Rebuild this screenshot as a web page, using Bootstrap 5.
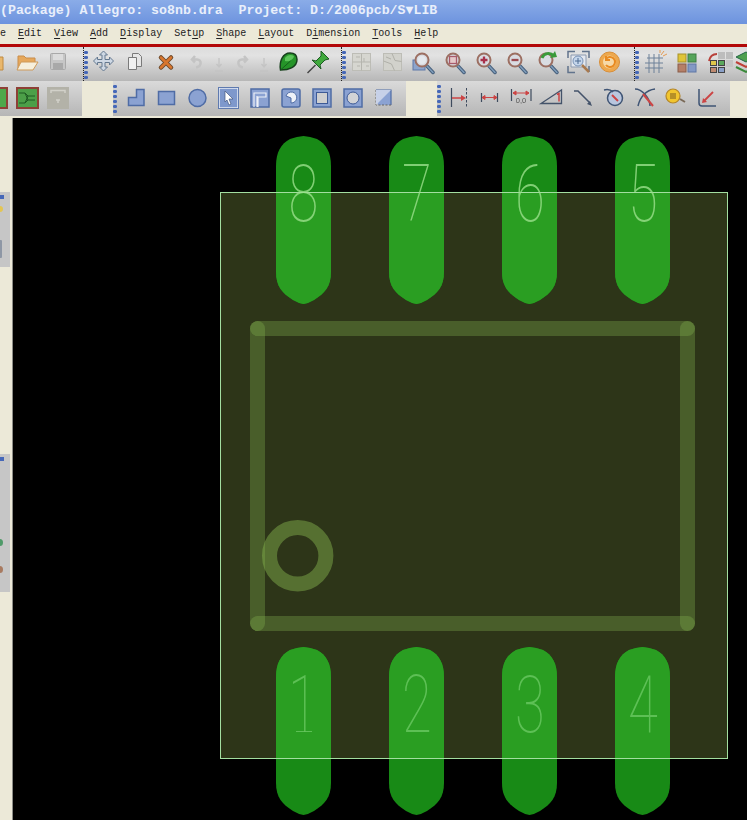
<!DOCTYPE html>
<html lang="en">
<head>
<meta charset="utf-8">
<title>Allegro</title>
<link href="https://cdn.jsdelivr.net/npm/bootstrap@5.3.0/dist/css/bootstrap.min.css" rel="stylesheet">
<style>
html,body{height:820px;overflow:hidden}
body{background:#ece9d8;font-family:"Liberation Mono",monospace}
.titlebar{height:24px;background:linear-gradient(#8aace8,#6d93de);color:#e9effb;font-size:13.25px;font-weight:700;line-height:22px;white-space:pre}
.menubar{height:20px;font-size:10px;line-height:20px;color:#222;gap:12px}
.menubar u{text-underline-offset:2px}
.redline{height:3px;background:#b30808}
.tbrow{height:34px}
.tbrow2{height:35px}
.tgrad{background:linear-gradient(#dcdcdc,#e2e2e2 25%,#b7b7b7)}
.tgrad2{background:linear-gradient(#dadada,#cfcfcf 30%,#b6b6b6)}
.grp-a{width:83px;overflow:hidden}
.grp-a2{width:82px}
.grp-a svg:first-child{margin-left:-20px}
.grp-b{width:258px}
.grp-c{width:293px}
.grp-d{width:113px;overflow:hidden}
.grp-e{width:293px}
.gap-x{width:31px}
.sep-line{border-left:1px dotted #222}
.grip{width:4px;background:radial-gradient(circle,#4668b8 1.7px,transparent 2px) 0 1px/4px 5px repeat-y;margin:2px 0;flex:none}
.grip-1{width:6.5px}
.grip-2{width:5.5px}
.ti{flex:none;width:31px;height:34px;overflow:visible;filter:blur(.35px)}
.w32{width:32px}.w26{width:26px}.w22{width:22.5px}
.ml4{margin-left:4.5px}
.under{height:2px}
.main-area{height:702px}
.leftcol{width:13px;border-right:1px solid #8c8c86;position:relative}
.leftcol .pan{position:absolute;left:0;width:10px;background:#c6c6c6}
.pan1{top:74px;height:75px}
.pan2{top:336px;height:138px}
.leftcol .dot{position:absolute;border-radius:50%}
.dot-b1{left:0;top:77px;width:4px;height:4px;background:#4668b8;border-radius:0!important}
.dot-y{left:-3px;top:88px;width:6px;height:6px;background:#e3c553}
.dot-s{left:-2px;top:122px;width:4px;height:18px;background:#8e97a5;border-radius:1px!important}
.dot-b2{left:0;top:339px;width:4px;height:4px;background:#4668b8;border-radius:0!important}
.dot-g{left:-3px;top:421px;width:6px;height:7px;background:#4f9a68}
.dot-br{left:-3px;top:448px;width:6px;height:7px;background:#a87a60}
.pcb{flex:1;display:block;background:#000}
.digit{font-family:Roboto,"Liberation Sans",sans-serif;font-weight:100;font-size:80px;text-anchor:middle}
.dg-t{fill:#9be08c;fill-opacity:.8}
.dg-b{fill:#66c65e;fill-opacity:.85}
</style>
</head>
<body class="m-0">
<svg class="d-none">
<symbol id="mag" viewBox="0 0 31 34" overflow="visible">
<path d="M19 19l6 6.500" stroke="#48607c" stroke-width="3.500" stroke-linecap="round"/>
<path d="M19 19l6 6.500" stroke="#7f9dbb" stroke-width="1.500" stroke-linecap="round"/>
<circle cx="14" cy="13" r="6.500" fill="#d9dce2" stroke="#9c6f62" stroke-width="2"/>
</symbol>
</svg>

<div class="titlebar">(Package) Allegro: so8nb.dra  Project: D:/2006pcb/S▼LIB</div>
<div class="menubar d-flex">
<span>e</span><span><u>E</u>dit</span><span><u>V</u>iew</span><span><u>A</u>dd</span><span><u>D</u>isplay</span><span>Set<u>u</u>p</span><span><u>S</u>hape</span><span><u>L</u>ayout</span><span>D<u>i</u>mension</span><span><u>T</u>ools</span><span><u>H</u>elp</span>
</div>
<div class="redline"></div>

<div class="tbrow tgrad d-flex overflow-hidden">
<div class="grp-a d-flex flex-none">
<svg class="ti" viewBox="0 0 31 34"><path d="M6 8h7l2 2h8v13H6z" fill="#e9b76c" stroke="#c08a40"/></svg>
<svg class="ti" viewBox="0 0 31 34"><path d="M7 23V9h6l2 2h9v4" fill="#e6a85c" stroke="#c98d4a"/><path d="M10 15h17l-5 8H6z" fill="#f6efdc" stroke="#cf9a58"/></svg>
<svg class="ti" viewBox="0 0 31 34"><rect x="8.500" y="6.500" width="15" height="16" rx="1" fill="#c6c6c6" stroke="#a9a9a9"/><rect x="11" y="7" width="10" height="6" fill="#dcdcdc"/><rect x="11" y="16" width="10" height="6" fill="#a9a9a9"/></svg>
</div>
<div class="grp-b d-flex sep-line flex-none">
<div class="grip"></div>
<svg class="ti" viewBox="0 0 31 34"><path d="M15.500 4l4 4h-2.500v4.500h4.500v-2.500l4 4-4 4v-2.500h-4.500v4.500h2.500l-4 4-4-4h2.500v-4.500h-4.500v2.500l-4-4 4-4v2.500h4.500v-4.500h-2.500z" fill="#ced8e4" stroke="#64788f"/></svg>
<svg class="ti" viewBox="0 0 31 34"><path d="M13.500 6.500h6l3 3v10h-9z" fill="#e6e6e6" stroke="#7a7a7a"/><path d="M9.500 10.500h8v12h-8z" fill="#f0f0f0" stroke="#7a7a7a"/></svg>
<svg class="ti" viewBox="0 0 31 34"><path d="M11 10.500l10 10M21 10.500l-10 10" stroke="#6e4a2c" stroke-width="4.500" stroke-linecap="round"/><path d="M11 10.500l10 10M21 10.500l-10 10" stroke="#d9762e" stroke-width="2.500" stroke-linecap="round"/></svg>
<svg class="ti w22 ml4" viewBox="0 0 22.500 34"><path d="M9 9l-3 3.500 3 3M7 12.500h4c5 0 5 7-1 8" fill="none" stroke="#c4c4c4" stroke-width="2.500"/></svg>
<svg class="ti w22" viewBox="0 0 22.500 34"><path d="M11 11v9M8.500 17l2.500 3 2.500-3M7 24h8" fill="none" stroke="#c4c4c4" stroke-width="1.300"/></svg>
<svg class="ti w22" viewBox="0 0 22.500 34"><path d="M13 9l3 3.500-3 3M15 12.500h-4c-5 0-5 7 1 8" fill="none" stroke="#c4c4c4" stroke-width="2.500"/></svg>
<svg class="ti w22" viewBox="0 0 22.500 34"><path d="M11 11v9M8.500 17l2.500 3 2.500-3M7 24h8" fill="none" stroke="#c4c4c4" stroke-width="1.300"/></svg>
<svg class="ti w26" viewBox="0 0 26 34"><path d="M4.500 23C3 14 7 6 14 6c5 0 7 3 7 6.500C21 20 13 23 4.500 23z" fill="#259428" stroke="#17401c" stroke-width="1.500"/><path d="M9 11c2-3 6-4 9-2-1 4-5 6-9 5z" fill="#5cc45a"/><path d="M4.500 23l10-9" stroke="#14601a"/></svg>
<svg class="ti" viewBox="0 0 31 34"><path d="M5.500 26l8-8" stroke="#444" stroke-width="1.500"/><path d="M19 4l8 8-4 1-5 5 1 4-9-9 4 1 5-5z" fill="#3fa93c" stroke="#1d5a24"/></svg>
</div>
<div class="grp-c d-flex sep-line flex-none">
<div class="grip"></div>
<svg class="ti" viewBox="0 0 31 34"><rect x="6.500" y="6.500" width="18" height="17" fill="#d6d6d0" stroke="#bdbdb6"/><path d="M6.500 15h18M15.500 6.500v17M10 10h4M18 11v4M11 19h3M20 19h3" stroke="#b5b5ae"/></svg>
<svg class="ti" viewBox="0 0 31 34"><rect x="6.500" y="6.500" width="18" height="17" fill="#d2d2cc" stroke="#bdbdb6"/><path d="M6.500 14l8 3 3 6.500M15 6.500l3 7 6.500 1M9 10l5 2" stroke="#b0b0a9" fill="none"/></svg>
<svg class="ti" viewBox="0 0 31 34"><rect x="5" y="13" width="12" height="10" fill="#8ea5cc" stroke="#5f79a8"/><use href="#mag" width="31" height="34"/><circle cx="14" cy="13" r="4" fill="#edf1f6" opacity=".6"/></svg>
<svg class="ti" viewBox="0 0 31 34"><use href="#mag" width="31" height="34"/><rect x="10.500" y="9.500" width="7" height="7" fill="#e5c9c9" stroke="#a85a6a" stroke-width="1.300"/></svg>
<svg class="ti" viewBox="0 0 31 34"><use href="#mag" width="31" height="34"/><path d="M10.500 13h7M14 9.500v7" stroke="#a8304a" stroke-width="2.300"/></svg>
<svg class="ti" viewBox="0 0 31 34"><use href="#mag" width="31" height="34"/><path d="M10.500 13h7" stroke="#9a4a50" stroke-width="2.300"/></svg>
<svg class="ti" viewBox="0 0 31 34"><use href="#mag" width="31" height="34"/><path d="M10 11c2-5 8-6 12-2" fill="none" stroke="#3a9a3a" stroke-width="3"/><path d="M18 11l7-1-2-6z" fill="#3a9a3a"/></svg>
<svg class="ti" viewBox="0 0 31 34"><path d="M5 11V4.500h7M19 4.500h7V11M26 19v6M5 19v6.500h7" fill="none" stroke="#61738c" stroke-width="1.500"/><path d="M8 8h15v12H8z" fill="#e3e7ee" stroke="#8c9ab0"/><circle cx="15" cy="14" r="5" fill="#c5d6ec" stroke="#7a93b5"/><path d="M15 11v6M12 14h6" stroke="#4d6a90"/><path d="M19 18l7 7" stroke="#a87a50" stroke-width="2.500"/></svg>
<svg class="ti" viewBox="0 0 31 34"><circle cx="15.500" cy="15" r="10" fill="#eda84e" stroke="#d88e38"/><circle cx="15.500" cy="15" r="6.500" fill="#f6d9a8"/><path d="M12 12a5 5 0 1 1 0 6M12 9v4h4" fill="none" stroke="#e98a20" stroke-width="2"/></svg>
</div>
<div class="grp-d d-flex sep-line flex-none">
<div class="grip"></div>
<svg class="ti w32" viewBox="0 0 32 34"><path d="M8 11h16M6 16h18M6 21h18M10 7v19M15 7v19M20 7v19" stroke="#6d8098"/><path d="M22 8l3-4M24 9l4-2M21 6l0-3" stroke="#e49a50"/></svg>
<svg class="ti w32" viewBox="0 0 32 34"><rect x="7" y="7" width="8" height="8" fill="#dfc438" stroke="#a8922a"/><rect x="17" y="7" width="8" height="8" fill="#55a45a" stroke="#3d7d42"/><rect x="7" y="17" width="8" height="8" fill="#b57f68" stroke="#8a5c48"/><rect x="17" y="17" width="8" height="8" fill="#8399c4" stroke="#5f76a5"/></svg>
<svg class="ti" viewBox="0 0 31 34"><rect x="15" y="5" width="7" height="7" fill="#bdbdbd"/><rect x="23" y="5" width="7" height="7" fill="#bdbdbd"/><rect x="23" y="13" width="7" height="7" fill="#c4c4c4"/><path d="M6 14c1-5 4-7 8-7" fill="none" stroke="#b8403a" stroke-width="2"/><rect x="7.500" y="13.500" width="6" height="5" fill="#e0c84a" stroke="#444"/><rect x="15.500" y="13.500" width="6" height="5" fill="#5aa85c" stroke="#444"/><rect x="7.500" y="20.500" width="6" height="5" fill="#c08a70" stroke="#444"/><rect x="15.500" y="20.500" width="6" height="5" fill="#8aa0c8" stroke="#444"/></svg>
<svg class="ti" viewBox="0 0 31 34"><path d="M2 10l10-5 10 5-10 5z" fill="#4fa04f" stroke="#264"/><path d="M2 15l10 5 10-5" fill="none" stroke="#c04038" stroke-width="2"/><path d="M2 20l10 5 10-5" fill="none" stroke="#3a8a3a" stroke-width="2"/></svg>
</div>
</div>

<div class="tbrow2 d-flex overflow-hidden">
<div class="grp-a grp-a2 d-flex flex-none tgrad2">
<svg class="ti" viewBox="0 0 31 34"><rect x="6" y="7" width="21" height="20" fill="#4ea84a" stroke="#8e4036" stroke-width="2"/></svg>
<svg class="ti" viewBox="0 0 31 34"><rect x="6" y="7" width="21" height="20" fill="#4c9f48" stroke="#8e4036" stroke-width="2"/><path d="M8 12h6l3 3h7M8 22h6l3-3h7M14 12l3 7M14 22l3-7" fill="none" stroke="#1f5a22"/></svg>
<svg class="ti" viewBox="0 0 31 34"><rect x="5" y="6" width="22" height="22" fill="#b3b2a8"/><path d="M9 12V9.500h14V12M14 19h4M16 19v3" fill="none" stroke="#d2d1c9" stroke-width="1.500"/></svg>
</div>
<div class="gap-x flex-none"></div>
<div class="grp-e d-flex flex-none tgrad2">
<div class="grip grip-1"></div>
<svg class="ti" viewBox="0 0 31 34"><path d="M16.500 8.500h7.500v16H8.500v-8h8z" fill="#8ba2d2" stroke="#4f6ca5" stroke-width="1.500"/></svg>
<svg class="ti" viewBox="0 0 31 34"><rect x="7.500" y="10.500" width="16" height="13" fill="#8ba2d2" stroke="#4f6ca5" stroke-width="1.500"/></svg>
<svg class="ti" viewBox="0 0 31 34"><circle cx="15.500" cy="17" r="8.500" fill="#8ba2d2" stroke="#4f6ca5" stroke-width="1.500"/></svg>
<svg class="ti" viewBox="0 0 31 34"><rect x="6" y="7" width="19" height="20" fill="#7e98cc" stroke="#e9edf5" stroke-width="1.500"/><rect x="5.500" y="6.500" width="20" height="21" fill="none" stroke="#5f7aaf"/><path d="M12 10l8 8h-4l2 5-2 1-2-5-2 2z" fill="#fff" stroke="#44587f" stroke-width=".7"/></svg>
<svg class="ti" viewBox="0 0 31 34"><rect x="7" y="8" width="18" height="18" fill="#8ba2d2" stroke="#4f6ca5" stroke-width="1.500"/><path d="M10 26V12h12v4h-8v10M13 26V15" fill="none" stroke="#eef1f7" stroke-width="1.200"/></svg>
<svg class="ti" viewBox="0 0 31 34"><rect x="7" y="8" width="18" height="18" rx="2" fill="#8ba2d2" stroke="#4f6ca5" stroke-width="1.500"/><path d="M11 15a5.500 5.500 0 1 1 5 7v-5z" fill="#eef1f7" stroke="#4f6ca5"/></svg>
<svg class="ti" viewBox="0 0 31 34"><rect x="7" y="8" width="18" height="18" fill="#8ba2d2" stroke="#4f6ca5" stroke-width="1.500"/><rect x="10.500" y="11.500" width="11" height="11" fill="#cfcfd0" stroke="#3d5a96"/></svg>
<svg class="ti" viewBox="0 0 31 34"><rect x="7" y="8" width="18" height="18" fill="#8ba2d2" stroke="#4f6ca5" stroke-width="1.500"/><circle cx="16" cy="17" r="6" fill="#d2d3d6" stroke="#3d5a96"/></svg>
<svg class="ti" viewBox="0 0 31 34"><path d="M8 9h15v15H10" fill="#8ba2d2"/><path d="M8 9h15v15" fill="none" stroke="#4f6ca5" stroke-width="1.200"/><path d="M8 9v15h15" fill="none" stroke="#666" stroke-dasharray="2 1.500"/><path d="M8 9h15L8 24z" fill="#c7d1e8"/></svg>
</div>
<div class="gap-x flex-none"></div>
<div class="grp-e d-flex flex-none tgrad2">
<div class="grip grip-2"></div>
<svg class="ti" viewBox="0 0 31 34"><path d="M8.500 7v19" stroke="#3e4b5e" stroke-width="1.200"/><path d="M23.500 7v19" stroke="#3e4b5e" stroke-dasharray="2.500 1.500"/><path d="M9 17h12" stroke="#c44" stroke-width="1.500"/><path d="M23 17l-5-3v6z" fill="#c44"/></svg>
<svg class="ti" viewBox="0 0 31 34"><path d="M7.500 12v9M23.500 12v9" stroke="#3e4b5e" stroke-width="1.200"/><path d="M8 16.500h15M8 16.500l3-2v4zM23 16.500l-3-2v4z" stroke="#c44" fill="#c44"/></svg>
<svg class="ti" viewBox="0 0 31 34"><path d="M6.500 8v12M26 8v12" stroke="#3e4b5e" stroke-width="1.200"/><path d="M8 12h16M8 12l3-2v4zM24 12l-3-2v4z" stroke="#c44" fill="#c44"/><text x="16" y="21.500" font-family="Liberation Sans" font-size="7.500" fill="#555" text-anchor="middle">0,0</text></svg>
<svg class="ti" viewBox="0 0 31 34"><path d="M5 22.500h20.500V9z" fill="none" stroke="#44536a" stroke-width="1.300"/><path d="M21 13.500l2-1v8" fill="none" stroke="#c44" stroke-width="1.500"/></svg>
<svg class="ti" viewBox="0 0 31 34"><path d="M7 10h4l12 12" fill="none" stroke="#44536a" stroke-width="1.500"/><path d="M25 25l-5-2 3-3z" fill="#44536a"/></svg>
<svg class="ti" viewBox="0 0 31 34"><circle cx="17" cy="17" r="7.500" fill="#b9c6de" stroke="#3f5474" stroke-width="1.500"/><path d="M6 9c4-1 7 0 9 2" fill="none" stroke="#3f5474" stroke-width="1.500"/><path d="M14 14l6 6" stroke="#c44" stroke-width="2"/></svg>
<svg class="ti" viewBox="0 0 31 34"><path d="M6 8c7 0 15 9 15 17M26 8C17 9 11 16 9 25" fill="none" stroke="#3f5474" stroke-width="1.500"/><path d="M14 13l10 12" stroke="#c44" stroke-width="2"/></svg>
<svg class="ti" viewBox="0 0 31 34"><circle cx="13" cy="15" r="7" fill="#f1c52e" stroke="#b4862a" stroke-width="1.200"/><path d="M10 13h6M10 15h6M10 17h6" stroke="#7a5a20"/><path d="M20 18l5 3" stroke="#7a6a58" stroke-width="2"/></svg>
<svg class="ti" viewBox="0 0 31 34"><path d="M8 8v14q0 3 3 3h14" fill="none" stroke="#3f5474" stroke-width="1.500"/><path d="M22 11l-9 9" stroke="#c44" stroke-width="1.800"/><path d="M11 22l1-5 4 4z" fill="#c44"/></svg>
</div>
</div>
<div class="under"></div>

<div class="main-area d-flex">
<div class="leftcol flex-none">
<div class="pan pan1"></div><div class="pan pan2"></div>
<div class="dot dot-b1"></div><div class="dot dot-y"></div><div class="dot dot-s"></div>
<div class="dot dot-b2"></div><div class="dot dot-g"></div><div class="dot dot-br"></div>
</div>
<svg class="pcb" viewBox="13 118 734 702" preserveAspectRatio="none">
<defs>
<path id="padT" d="M276 166C276 152 281 144 290 139Q297 136.500 303.500 136Q310 136.500 317 139C326 144 331 152 331 166V272C331 286 325 293 314 300Q309 303 303.500 304Q298 303 293 300C282 293 276 286 276 272Z"/>
<clipPath id="pkgClip"><rect x="220" y="192" width="508" height="567"/></clipPath>
</defs>
<rect x="220.500" y="192.500" width="507" height="566" fill="#2d3518"/>
<g fill="#188a16">
<use href="#padT"/><use href="#padT" x="113"/><use href="#padT" x="226"/><use href="#padT" x="339"/>
<use href="#padT" y="511"/><use href="#padT" x="113" y="511"/><use href="#padT" x="226" y="511"/><use href="#padT" x="339" y="511"/>
</g>
<g fill="#2a9e22" clip-path="url(#pkgClip)">
<use href="#padT"/><use href="#padT" x="113"/><use href="#padT" x="226"/><use href="#padT" x="339"/>
<use href="#padT" y="511"/><use href="#padT" x="113" y="511"/><use href="#padT" x="226" y="511"/><use href="#padT" x="339" y="511"/>
</g>
<rect x="220.500" y="192.500" width="507" height="566" fill="none" stroke="#a3dfa0"/>
<g stroke="#84b24e" stroke-opacity=".33" stroke-width="15" stroke-linecap="round" fill="none">
<path d="M257.500 328.500H687.500"/><path d="M257.500 623.500H687.500"/><path d="M257.500 328.500V623.500"/><path d="M687.500 328.500V623.500"/>
</g>
<circle cx="297.700" cy="555.800" r="28.200" fill="none" stroke="#84b24e" stroke-opacity=".48" stroke-width="15"/>
<g class="digit dg-t">
<text transform="translate(303.500 221) scale(.68 1)">8</text>
<text transform="translate(417 221) scale(.68 1)">7</text>
<text transform="translate(530 221) scale(.68 1)">6</text>
<text transform="translate(643 221) scale(.68 1)">5</text>
</g>
<g class="digit dg-b">
<text transform="translate(303 732) scale(.68 1)">1</text>
<text transform="translate(417 732) scale(.68 1)">2</text>
<text transform="translate(530 732) scale(.68 1)">3</text>
<text transform="translate(643 732) scale(.68 1)">4</text>
</g>
<path d="M296 731.500H312" stroke="#66c65e" stroke-opacity=".85"/>
</svg>
</div>
</body>
</html>
